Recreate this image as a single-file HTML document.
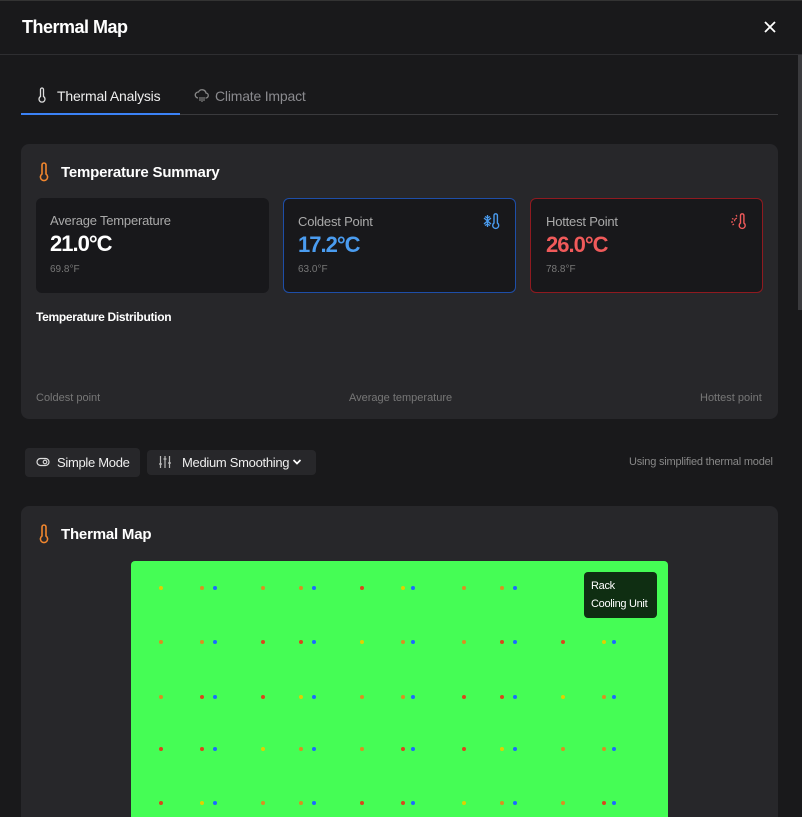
<!DOCTYPE html>
<html><head><meta charset="utf-8"><style>
*{box-sizing:border-box;margin:0;padding:0}
html,body{width:802px;height:817px;overflow:hidden}
body{background:#19191b;font-family:"Liberation Sans",sans-serif;color:#fff;position:relative}
.a{position:absolute}
.card{background:#27272a;border-radius:8px}
.ic{background:#18181b;border-radius:6px}
.d{position:absolute;width:4px;height:4px;border-radius:50%}
.y{background:#e0d000}.o{background:#d99020}.r{background:#d8481c}.b{background:#1a6cff}
</style></head><body>
<div class="a" style="left:0;top:0;width:802px;height:1px;background:#333"></div>
<div class="a" style="left:22px;top:17px;font-size:18px;font-weight:bold;letter-spacing:-0.5px">Thermal Map</div>
<svg class="a" style="left:763px;top:20px" width="14" height="14" viewBox="0 0 14 14"><path d="M2 2L12 12M12 2L2 12" stroke="#fff" stroke-width="1.8"/></svg>
<div class="a" style="left:0;top:54px;width:802px;height:1px;background:#2e2e31"></div>
<div class="a" style="left:798px;top:55px;width:4px;height:255px;background:#3a3a3d"></div>

<div class="a" style="left:21px;top:114px;width:757px;height:1px;background:#3a3a3d"></div>
<div class="a" style="left:21px;top:113px;width:159px;height:2px;background:#3b82f6"></div>
<svg class="a" style="left:38px;top:87px" width="8" height="16" viewBox="0 0 8 16"><path d="M2.5 2.5a1.5 1.5 0 013 0v7a3 3 0 11-3 0z" fill="none" stroke="#ddd" stroke-width="1.3"/></svg>
<div class="a" style="left:57px;top:88px;font-size:14px;color:#eee;letter-spacing:-0.2px">Thermal Analysis</div>
<svg class="a" style="left:194px;top:87px" width="16" height="16" viewBox="0 0 16 16"><path d="M4 11a3 3 0 01.5-6 4 4 0 017.5 1 2.5 2.5 0 01-.5 5" fill="none" stroke="#888" stroke-width="1.3"/><path d="M6 10v4M8 10v5M10 10v4" stroke="#888" stroke-width="1.1"/></svg>
<div class="a" style="left:215px;top:88px;font-size:14px;color:#8a8a8e;letter-spacing:-0.2px">Climate Impact</div>

<div class="a card" style="left:21px;top:144px;width:757px;height:275px"></div>
<svg class="a" style="left:38px;top:162px" width="12" height="20" viewBox="0 0 12 20"><path d="M4 3a2 2 0 014 0v9a3.6 3.6 0 11-4 0z" fill="none" stroke="#f0862e" stroke-width="1.6"/></svg>
<div class="a" style="left:61px;top:164px;font-size:15px;font-weight:bold;letter-spacing:-0.2px">Temperature Summary</div>

<div class="a ic" style="left:36px;top:198px;width:233px;height:95px"></div>
<div class="a" style="left:50px;top:213px;font-size:13px;color:#aaa;letter-spacing:-0.2px">Average Temperature</div>
<div class="a" style="left:50px;top:231px;font-size:22px;font-weight:bold;letter-spacing:-1px">21.0°C</div>
<div class="a" style="left:50px;top:264px;font-size:10px;color:#777">69.8°F</div>

<div class="a ic" style="left:283px;top:198px;width:233px;height:95px;border:1px solid #1e4ea8"></div>
<div class="a" style="left:298px;top:214px;font-size:13px;color:#aaa;letter-spacing:-0.2px">Coldest Point</div>
<div class="a" style="left:298px;top:232px;font-size:22px;font-weight:bold;color:#4a9cf0;letter-spacing:-1px">17.2°C</div>
<div class="a" style="left:298px;top:264px;font-size:10px;color:#777">63.0°F</div>
<svg class="a" style="left:483px;top:212px" width="18" height="20" viewBox="0 0 18 20"><path d="M4.5 3v12M1 6l7 6M8 6l-7 6M2 4.5l2.5 1.5 2.5-1.5M2 13.5l2.5-1.5 2.5 1.5" stroke="#4a9cf0" stroke-width="1.3" fill="none"/><path d="M11 3.5a1.7 1.7 0 013.4 0v7.5a3 3 0 11-3.4 0z" fill="none" stroke="#4a9cf0" stroke-width="1.4"/></svg>

<div class="a ic" style="left:530px;top:198px;width:233px;height:95px;border:1px solid #8f1a20"></div>
<div class="a" style="left:546px;top:214px;font-size:13px;color:#aaa;letter-spacing:-0.2px">Hottest Point</div>
<div class="a" style="left:546px;top:232px;font-size:22px;font-weight:bold;color:#f05a5a;letter-spacing:-1px">26.0°C</div>
<div class="a" style="left:546px;top:264px;font-size:10px;color:#777">78.8°F</div>
<svg class="a" style="left:730px;top:212px" width="18" height="20" viewBox="0 0 18 20"><path d="M6 3l1 1.5M2 6.5l1.5.7M1 10h2M2.5 13l1.5-1M7 6.2a3 3 0 00-2.5 3" stroke="#f05a5a" stroke-width="1.2" fill="none"/><path d="M10.5 3.5a1.7 1.7 0 013.4 0v7.5a3 3 0 11-3.4 0z" fill="none" stroke="#f05a5a" stroke-width="1.4"/></svg>

<div class="a" style="left:36px;top:310px;font-size:12px;font-weight:bold;letter-spacing:-0.3px">Temperature Distribution</div>
<div class="a" style="left:36px;top:392px;font-size:11px;color:#777">Coldest point</div>
<div class="a" style="left:349px;top:392px;font-size:11px;color:#777">Average temperature</div>
<div class="a" style="left:700px;top:392px;font-size:11px;color:#777">Hottest point</div>

<div class="a" style="left:25px;top:448px;width:115px;height:29px;background:#27272a;border-radius:4px"></div>
<svg class="a" style="left:36px;top:457px" width="14" height="10" viewBox="0 0 14 10"><rect x="1" y="1.5" width="12" height="7" rx="3.5" fill="none" stroke="#ddd" stroke-width="1.2"/><circle cx="9" cy="5" r="1.8" fill="none" stroke="#ddd" stroke-width="1.1"/></svg>
<div class="a" style="left:57px;top:455px;font-size:13px;color:#eee;letter-spacing:-0.3px">Simple Mode</div>
<div class="a" style="left:147px;top:450px;width:169px;height:25px;background:#27272a;border-radius:4px"></div>
<svg class="a" style="left:158px;top:455px" width="14" height="14" viewBox="0 0 14 14"><path d="M2.5 1v12M7 1v12M11.5 1v12M1 9h3M5.5 4h3M10 8h3" stroke="#bbb" stroke-width="1.2"/></svg>
<div class="a" style="left:182px;top:455px;font-size:13px;color:#eee;letter-spacing:-0.3px">Medium Smoothing</div>
<svg class="a" style="left:292px;top:458px" width="10" height="8" viewBox="0 0 10 8"><path d="M1.5 2l3.5 3.5L8.5 2" fill="none" stroke="#fff" stroke-width="1.7"/></svg>
<div class="a" style="left:629px;top:456px;font-size:11px;color:#888;letter-spacing:-0.2px">Using simplified thermal model</div>

<div class="a card" style="left:21px;top:506px;width:757px;height:330px"></div>
<svg class="a" style="left:38px;top:524px" width="12" height="20" viewBox="0 0 12 20"><path d="M4 3a2 2 0 014 0v9a3.6 3.6 0 11-4 0z" fill="none" stroke="#f0862e" stroke-width="1.6"/></svg>
<div class="a" style="left:61px;top:526px;font-size:15px;font-weight:bold;letter-spacing:-0.2px">Thermal Map</div>

<div class="a" style="left:131px;top:561px;width:537px;height:270px;background:#45fd55;border-radius:4px">
<div class="d y" style="left:28px;top:25px"></div><div class="d o" style="left:69px;top:25px"></div><div class="d b" style="left:82px;top:25px"></div><div class="d o" style="left:130px;top:25px"></div><div class="d o" style="left:168px;top:25px"></div><div class="d b" style="left:181px;top:25px"></div><div class="d r" style="left:229px;top:25px"></div><div class="d y" style="left:270px;top:25px"></div><div class="d b" style="left:280px;top:25px"></div><div class="d o" style="left:331px;top:25px"></div><div class="d o" style="left:369px;top:25px"></div><div class="d b" style="left:382px;top:25px"></div>
<div class="d o" style="left:28px;top:79px"></div><div class="d o" style="left:69px;top:79px"></div><div class="d b" style="left:82px;top:79px"></div><div class="d r" style="left:130px;top:79px"></div><div class="d r" style="left:168px;top:79px"></div><div class="d b" style="left:181px;top:79px"></div><div class="d y" style="left:229px;top:79px"></div><div class="d o" style="left:270px;top:79px"></div><div class="d b" style="left:280px;top:79px"></div><div class="d o" style="left:331px;top:79px"></div><div class="d r" style="left:369px;top:79px"></div><div class="d b" style="left:382px;top:79px"></div><div class="d r" style="left:430px;top:79px"></div><div class="d y" style="left:471px;top:79px"></div><div class="d b" style="left:481px;top:79px"></div>
<div class="d o" style="left:28px;top:134px"></div><div class="d r" style="left:69px;top:134px"></div><div class="d b" style="left:82px;top:134px"></div><div class="d r" style="left:130px;top:134px"></div><div class="d y" style="left:168px;top:134px"></div><div class="d b" style="left:181px;top:134px"></div><div class="d o" style="left:229px;top:134px"></div><div class="d o" style="left:270px;top:134px"></div><div class="d b" style="left:280px;top:134px"></div><div class="d r" style="left:331px;top:134px"></div><div class="d r" style="left:369px;top:134px"></div><div class="d b" style="left:382px;top:134px"></div><div class="d y" style="left:430px;top:134px"></div><div class="d o" style="left:471px;top:134px"></div><div class="d b" style="left:481px;top:134px"></div>
<div class="d r" style="left:28px;top:186px"></div><div class="d r" style="left:69px;top:186px"></div><div class="d b" style="left:82px;top:186px"></div><div class="d y" style="left:130px;top:186px"></div><div class="d o" style="left:168px;top:186px"></div><div class="d b" style="left:181px;top:186px"></div><div class="d o" style="left:229px;top:186px"></div><div class="d r" style="left:270px;top:186px"></div><div class="d b" style="left:280px;top:186px"></div><div class="d r" style="left:331px;top:186px"></div><div class="d y" style="left:369px;top:186px"></div><div class="d b" style="left:382px;top:186px"></div><div class="d o" style="left:430px;top:186px"></div><div class="d o" style="left:471px;top:186px"></div><div class="d b" style="left:481px;top:186px"></div>
<div class="d r" style="left:28px;top:240px"></div><div class="d y" style="left:69px;top:240px"></div><div class="d b" style="left:82px;top:240px"></div><div class="d o" style="left:130px;top:240px"></div><div class="d o" style="left:168px;top:240px"></div><div class="d b" style="left:181px;top:240px"></div><div class="d r" style="left:229px;top:240px"></div><div class="d r" style="left:270px;top:240px"></div><div class="d b" style="left:280px;top:240px"></div><div class="d y" style="left:331px;top:240px"></div><div class="d o" style="left:369px;top:240px"></div><div class="d b" style="left:382px;top:240px"></div><div class="d o" style="left:430px;top:240px"></div><div class="d r" style="left:471px;top:240px"></div><div class="d b" style="left:481px;top:240px"></div>
<div class="a" style="left:453px;top:11px;width:73px;height:46px;background:#0f2e12;border-radius:4px;padding:5px 7px;font-size:11px;line-height:18px;color:#fff;letter-spacing:-0.3px">Rack<br>Cooling Unit</div>
</div>
</body></html>
